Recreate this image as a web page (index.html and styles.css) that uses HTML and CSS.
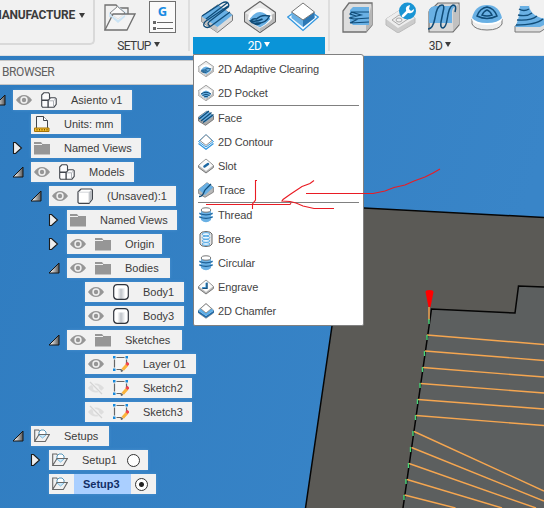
FILE: index.html
```html
<!DOCTYPE html>
<html lang="en">
<head>
<meta charset="utf-8">
<title>Manufacture</title>
<link rel="stylesheet" href="styles.css">
</head>
<body>
<svg class="defs" width="0" height="0">
  <defs>
    <linearGradient id="arrowFill" x1="0" y1="0" x2="1" y2="0"><stop offset=".2" stop-color="#eee"/><stop offset="1" stop-color="#555"/></linearGradient>
    <linearGradient id="cyl" x1="0" y1="0" x2="1" y2="0"><stop offset="0" stop-color="#fff"/><stop offset=".25" stop-color="#fff"/><stop offset=".5" stop-color="#c0c4ca"/><stop offset=".8" stop-color="#fff"/></linearGradient>
    <linearGradient id="sky" x1="0" y1="0" x2="1" y2=".3"><stop offset="0" stop-color="#2f7cc0"/><stop offset="1" stop-color="#3985c8"/></linearGradient>
  </defs>
  <symbol id="open" viewBox="0 0 12 12"><path d="M11 1v10H1z" fill="url(#arrowFill)" stroke="#161616"/></symbol>
  <symbol id="closed" viewBox="0 0 12 12"><path d="M1.500.500h2L9.500 6l-6 5.500h-2z" fill="#eee" stroke="#1c1c1c" stroke-width="1.100"/></symbol>
  <symbol id="eye" viewBox="0 0 16 16"><path d="M0 8Q3.500 3 8 3t8 5q-3.500 5-8 5T0 8z" fill="#969696"/><circle cx="8" cy="8" r="3.700" fill="#f1f1f1"/><circle cx="8" cy="8" r="2.200" fill="#969696"/></symbol>
  <symbol id="hidden" viewBox="0 0 16 16"><path d="M0 8Q3.500 3.500 8 3.500T16 8q-3.500 4.500-8 4.500T0 8z" fill="#dedede"/><circle cx="8" cy="8" r="2.800" fill="#f1f1f1"/><path d="M2 1.500l13 13" stroke="#f1f1f1" stroke-width="3"/><path d="M2 2l12 12" stroke="#d4d4d4" stroke-width="1.200"/></symbol>
  <symbol id="folder" viewBox="0 0 16 16"><path d="M0 2h7l1.500 2H16v10.500H0z" fill="#969696"/><path d="M0 4.500h8" stroke="#f1f1f1"/></symbol>
  <symbol id="part" viewBox="0 0 16 16"><g fill="#fbfbfc" stroke="#41454c" stroke-width="1.100" stroke-linejoin="round"><path d="M.700 3L3 .700h4.500L8.500 2v6H.700z"/><path d="M.700 8.500h6.500v6.800H1.500L.700 14z"/><path d="M7.200 8.500l2.200-2.700h4.500l1.300 1v5.500l-2.400 3H7.200z"/></g><path d="M7.800 8.800h4.700l2.200-2M12.500 9v6" fill="none" stroke="#aeb2b8"/></symbol>
  <symbol id="cube" viewBox="0 0 16 16"><path d="M1 4l3-3h10.300l1.200 1v9l-3.500 4.300H2L1 14.300z" fill="#fff" stroke="#41454c" stroke-width="1.200"/><path d="M12 4l3-2.500V11l-3 3.500z" fill="#b9bcc1"/><path d="M1.500 4.200H12v10.500" fill="none" stroke="#d3d5d9"/></symbol>
  <symbol id="units" viewBox="0 0 16 16"><path d="M2.500 13V.500h7l4 4V13z" fill="#f5f6f8" stroke="#41454c"/><path d="M9.500.500v4h4" fill="#fff" stroke="#41454c"/><path d="M.500 12h14.500v3.500H.500z" fill="#f3bd2c" stroke="#a57408"/><path d="M3 13v1.500M5.500 13v1.500M8 13v1.500M10.500 13v1.500M13 13v1.500" stroke="#7b5200"/></symbol>
  <symbol id="body" viewBox="0 0 16 16"><path d="M.700 3.500Q1.500.700 4 .700h8q2.500 0 3.300 2.800v9q-.8 2.800-3.300 2.800H4Q1.500 15.300.700 12.500z" fill="url(#cyl)" stroke="#30343c" stroke-width="1.200"/><path d="M2 2.500Q8 .500 14 2.500 13 4.500 8 4.500T2 2.500z" fill="#fff"/></symbol>
  <symbol id="sketch" viewBox="0 0 16 16"><path d="M1.500 1.500h12v12h-12z" fill="#f6f6f6"/><path d="M3.500 1.500h8M3.500 13.500h5M1.500 3.500v8M13.500 3.500v4" stroke="#666" stroke-width="1.200"/><path d="M0 0h2.500v2.500H0zM12.500 0H15v2.500h-2.500zM0 12.500h2.500V15H0z" fill="#1689dc"/><path d="M9.700 13.700l4.500-5" stroke="#fbb43c" stroke-width="3.200"/><path d="M13.500 9l2-2.300" stroke="#f04450" stroke-width="3.200"/><path d="M8 15.500l1.500-1.500" stroke="#666" stroke-width="2"/></symbol>
  <symbol id="setup" viewBox="0 0 16 16"><path d="M.700 13.500V2h4l1 1.500M.700 13.500L5 6.500h10.300l-4 7z" fill="none" stroke="#686868" stroke-width="1.100"/><path d="M5 7l3.500 3L12 7" fill="#cce8f8" stroke="#78b9df"/><path d="M5 6.500V4l2-2h3l2 2v2.500" fill="#fff" stroke="#5596ba"/><path d="M4.500 6.500h10.800" stroke="#686868"/></symbol>

  <symbol id="face" viewBox="0 0 32 32"><path d="M.500 15.500L16.500 4l15 10v5.500L16.500 31.500.500 20.500z" fill="#dcdcdc" stroke="#777"/><path d="M.500 15.500v5l16 11V26z" fill="#c3c3c3"/><path d="M.500 15.500L16.500 4l15 10L16.500 26z" fill="#69b0e4"/><path d="M1 15L21 2q4-2 6 0 2 3-1 5L9 20q-4 3 0 5M5 18L26 2M3 25q3 3 7 0L29 11M3 25q-1-3 2-5L27 5" fill="none" stroke="#104c78" stroke-width="1.300"/></symbol>
  <symbol id="block" viewBox="0 0 32 32"><path d="M.500 11.500L16 .500l15.500 11v9L16 31.500.500 20.500z" fill="#ececec" stroke="#666" stroke-width="1.200"/><path d="M16 20v11L1 20v-8z" fill="#d0d0d0"/><path d="M31 12v8L16 31V20z" fill="#b9b9b9"/><path d="M4 18q0-10 12-11 12 1 12 11-5 6-12 9-7-3-12-9z" fill="#fff"/><path d="M5.500 18q10.500-14 21 0-4 5-10.500 8.500Q9 23 5.500 18z" fill="#69b0e4"/></symbol>
  <symbol id="adaptive" viewBox="0 0 32 32"><use href="#block"/><path d="M6.500 20q3-3 6-2 5-5 13-3-4 8-13 7-4 1-6-2q7 1 12-2M9 22q4 3 8 0" fill="none" stroke="#104c78" stroke-width="1.500"/></symbol>
  <symbol id="pocket" viewBox="0 0 32 32"><use href="#block"/><path d="M6 18q10-7 20 0M9 21q7-5 14 0M12 24q4-3 8 0" fill="none" stroke="#104c78" stroke-width="2"/></symbol>
  <symbol id="contour" viewBox="0 0 32 32"><path d="M.700 16L16 5l15.300 11L16 29.500z" fill="#f4faff" stroke="#3196df" stroke-width="1.300"/><path d="M4.500 11v6L16 26l11.500-9v-6z" fill="#69b0e4"/><path d="M16 19v7l11.500-9v-6z" fill="#2c78b5"/><path d="M4.500 11L16 2l11.500 9L16 19z" fill="#fff" stroke="#777"/></symbol>
  <symbol id="contourSmall" viewBox="0 0 16 16"><path d="M.500 9.500L8 15.300l7.500-5.800" fill="none" stroke="#3196df" stroke-width="1.200"/><path d="M.500 7.500L8 .700l7.500 6.800L8 13z" fill="#e8f5ff" stroke="#3196df"/><path d="M2 6.500L8 .700l6 5.800-6 4.800z" fill="#fff" stroke="#777" stroke-width=".8"/></symbol>
  <symbol id="faceSmall" viewBox="0 0 16 16"><path d="M.500 7L9 1l6.500 5v3.500L7.500 15.300.500 11z" fill="#a9a9a9" stroke="#666" stroke-width=".8"/><path d="M.500 7.500L9 1l6.500 5-8 6z" fill="#69b0e4"/><path d="M1 9L11 1M3 11L13.500 2.500M5 12.500L15.500 4.500" stroke="#104c78" stroke-width="1.300"/></symbol>
  <symbol id="slot" viewBox="0 0 16 16"><path d="M.600 7.500L8 1l7.400 6.500v2L8 15 .600 9.500z" fill="#bbb" stroke="#777"/><path d="M1 7.500L8 1.300l7 6.200L8 13z" fill="#fafafa"/><path d="M6.500 8.500l3.500-2.500" stroke="#1c67a2" stroke-width="2.500" stroke-linecap="round"/></symbol>
  <symbol id="trace" viewBox="0 0 16 16"><path d="M.600 7.500L9 .700l6.400 4.500v5L7 15.300.600 11.500z" fill="#b8b8b8" stroke="#777" stroke-width=".8"/><path d="M.600 7.500L9 .700l6.400 4.500L7 13z" fill="#69b0e4"/><path d="M1 14.500c6 0 3-5 8-8.500l4-4" fill="none" stroke="#104c78" stroke-width="1.300"/></symbol>
  <symbol id="thread" viewBox="0 0 16 16"><path d="M3 3v10q5 4.500 10 0V3z" fill="#69b0e4"/><ellipse cx="8" cy="3" rx="4.700" ry="2.200" fill="#fff" stroke="#777"/><path d="M1 5.500q7 2 14 0 0 2-2 2.500-5 1.500-10 0-2-.5-2-2.500zM1 9q7 2 14 0 0 2-2 2.500-5 1.500-10 0-2-.5-2-2.500z" fill="#69b0e4"/><path d="M1.500 6.500q6.500 2.800 13 0M1.500 10q6.500 2.800 13 0" fill="none" stroke="#1c5f94" stroke-width="1.300"/></symbol>
  <symbol id="bore" viewBox="0 0 16 16"><path d="M2 3q1-2.500 6-2.500T14 3v10q-1 2.500-6 2.500T2 13z" fill="#e6e6e6" stroke="#666"/><g fill="#eaf6ff" stroke="#57aae5"><ellipse cx="8" cy="3.200" rx="3.800" ry="1.600"/><ellipse cx="8" cy="6.700" rx="3.800" ry="1.500"/><ellipse cx="8" cy="9.900" rx="3.800" ry="1.500"/><ellipse cx="8" cy="13" rx="3.800" ry="1.400"/></g></symbol>
  <symbol id="engrave" viewBox="0 0 16 16"><path d="M.600 7.500L8 1l7.400 6.500v2L8 15 .600 9.500z" fill="#bbb" stroke="#777"/><path d="M1 7.500L8 1.300l7 6.200L8 13z" fill="#fafafa"/><path d="M7.500 4l2-1v7h-5l-.5-2h3.500z" fill="#3d92d0"/><path d="M9 4v5.500H4.500" fill="none" stroke="#174e78" stroke-width="1.200"/></symbol>
  <symbol id="chamfer" viewBox="0 0 16 16"><path d="M.500 7L8 .700 15.500 7v3L8 15.300.500 10z" fill="#ddd" stroke="#888" stroke-width=".8"/><path d="M0 7.500L8 13l8-5.500v2L8 15 0 9.500z" fill="#1e69a8"/><path d="M.500 7.500l2-2L8 10l5.500-4.500 2 2L8 13z" fill="#5caee9"/><path d="M2.500 5.500L8 .700l5.500 4.800L8 10z" fill="#fff" stroke="#777" stroke-width=".8"/></symbol>
</svg>

<svg class="viewport" viewBox="0 0 544 508">
  <rect width="544" height="508" fill="url(#sky)"/>
  <path d="M350 207.300L544 217.500V508H305.500z" fill="#5b5a56"/>
  <path d="M431 309L515 313 518.500 286.500 544 287V508H403z" fill="#5c5f5f"/>
  <path d="M305.500 508L332 326 350 207.300 544 217.500" fill="none" stroke="#050505" stroke-width="1.500"/>
  <path d="M403 508L431.500 309 515 313 518.500 286 544 287" fill="none" stroke="#050505" stroke-width="1.500"/>
  <g fill="none" stroke="#f5a650" stroke-width="1.400">
    <path d="M429 307v13M427 335l117 9.500M425 351l119 9.500M423 367.500l121 9.500M420.500 383.500l123.500 9.500M418 399.500l126 9.500M416 415.500l128 10M414 431.500l130 59.500M411.500 447.500L544 501M409 463.500l127 44.500M407 479.500l95 28.500M404.500 495l51 13"/>
  </g>
  <path d="M429 319v5M427 335v5M424.500 351v5M422.500 367v5M420 383v5M417.500 399v5M415.500 415v5M413 431v5M410.500 447v5M408.500 463v5M406 479v5M404 495v5" stroke="#47d779" stroke-width="1.400"/>
  <path d="M425.500 292q0-2 4-2t4 2l-3 15h-2z" fill="#f00"/>
</svg>

<header class="toolbar">
  <div class="workspace"><span>MANUFACTURE</span><i class="caret"></i></div>
  <section class="group setup-group">
    <div class="icons">
      <svg class="folder-big" viewBox="0 0 32 28"><path d="M1 27V2h11l3 3h9v6" fill="none" stroke="#707070" stroke-width="1.300"/><path d="M5 10l9-7 9 7v4H5z" fill="#cfe5f5"/><path d="M6 10l7.500-6.500L21 10l-7 6z" fill="#fafafa" stroke="#888"/><path d="M1 27L9 11h22l-8 16z" fill="#f3f3f3" fill-opacity=".85" stroke="#707070" stroke-width="1.300"/><path d="M7 14l7 6 7-6v-2l-7 5-7-5z" fill="#cbe4f5"/></svg>
      <div class="gcode"><b>G</b><i></i><i></i></div>
    </div>
    <div class="label"><span>SETUP</span><i class="caret"></i></div>
  </section>
  <section class="group two-group">
    <div class="icons"><svg><use href="#face"/></svg><svg><use href="#adaptive"/></svg><svg><use href="#contour"/></svg></div>
    <div class="label active"><span>2D</span><i class="caret"></i></div>
  </section>
  <section class="group three-group">
    <div class="icons">
      <svg viewBox="0 0 32 32"><path d="M1 31V10L7 2h23v22l-6 7z" fill="#ddd" stroke="#707070" stroke-width="1.300"/><path d="M30 2v22l-6 7v-6z" fill="#b7b7b7"/><path d="M11 6h16v18H11l-3-3V9z" fill="#69b0e4"/><path d="M27 11H9l10 3-12 3 5 1 15-1M8 22l8-4M8 22l19-1M10 11l-2 2 6 2" fill="none" stroke="#104c78" stroke-width="1.200"/></svg>
      <svg viewBox="0 0 32 32"><path d="M1 18L15 9l15 8v5L13 32 1 24z" fill="#ccc" stroke="#bbb"/><path d="M1 18l14-9 15 8-17 10z" fill="#eee"/><path d="M7 19l7-5 9 4-9 6z" fill="none" stroke="#aaa"/><ellipse cx="14" cy="19" rx="3" ry="2" fill="none" stroke="#aaa"/><circle cx="22.500" cy="10" r="8.500" fill="#1995d4"/><path d="M18 15l5-5" stroke="#fff" stroke-width="2.600" stroke-linecap="round"/><path d="M25 4q-5 1-4 5 1 4 5 3 3-1 3-4l-3 2-2-2z" fill="#fff"/></svg>
      <svg viewBox="0 0 32 32"><path d="M1 30V11q1-4 5-5l4-4h21v22l-6 7H1z" fill="#d8d8d8" stroke="#707070" stroke-width="1.200"/><path d="M1 22V9q2-4 7-4h20q-4 2-4 6v11z" fill="#69b0e4"/><path d="M31 3v20l-6 7V12q0-5 6-9z" fill="#c1c1c1"/><path d="M0 28q5 0 7-11Q9 4 14 4q3 0 1 7l-2 10q-1 6 2 6 3-1 4-8 2-14 6-15 4 0 2 7" fill="none" stroke="#104c78" stroke-width="1.500"/></svg>
      <svg viewBox="0 0 32 32"><path d="M1 18v5q3 6 15 6t15-6v-5" fill="#eee" stroke="#777"/><ellipse cx="16" cy="18" rx="15" ry="6" fill="#fff"/><path d="M1 17Q4 4 16 4t15 13q-4 5-15 5T1 17z" fill="#69b0e4"/><path d="M6 15q3-8 10-9 7 1 10 9-10 5-20 0zm5-1q2-4 5-5 3 1 5 5-5 2-10 0z" fill="none" stroke="#104c78" stroke-width="1.500"/></svg>
      <svg viewBox="0 0 32 32"><path d="M1 25l7-4h24v6l-6 4H1z" fill="#ddd" stroke="#777"/><path d="M6 3h9q0 12 17 15v5l-6 3H1q5-9 5-23z" fill="#69b0e4"/><path d="M6 3l3-2h6v4H6z" fill="#eee"/><path d="M5 8q5 3 10 0M4 14q9 2 14-2M3 19q14 1 20-4M2 24q20 0 27-6" fill="none" stroke="#104c78" stroke-width="1.400"/></svg>
    </div>
    <div class="label"><span>3D</span><i class="caret"></i></div>
  </section>
</header>

<div class="browser-title">BROWSER</div>
<main class="tree">
  <div class="row l0"><svg class="toggle"><use href="#open"/></svg><div class="node w119"><svg><use href="#eye"/></svg><svg><use href="#part"/></svg><span>Asiento v1</span></div></div>
  <div class="row l1"><div class="node w90"><svg><use href="#units"/></svg><span>Units: mm</span></div></div>
  <div class="row l1"><svg class="toggle"><use href="#closed"/></svg><div class="node w110"><svg><use href="#folder"/></svg><span>Named Views</span></div></div>
  <div class="row l1"><svg class="toggle"><use href="#open"/></svg><div class="node w103"><svg><use href="#eye"/></svg><svg><use href="#part"/></svg><span>Models</span></div></div>
  <div class="row l2"><svg class="toggle"><use href="#open"/></svg><div class="node w127"><svg><use href="#eye"/></svg><svg><use href="#cube"/></svg><span>(Unsaved):1</span></div></div>
  <div class="row l3"><svg class="toggle"><use href="#closed"/></svg><div class="node w110"><svg><use href="#folder"/></svg><span>Named Views</span></div></div>
  <div class="row l3"><svg class="toggle"><use href="#closed"/></svg><div class="node w95"><svg><use href="#eye"/></svg><svg><use href="#folder"/></svg><span>Origin</span></div></div>
  <div class="row l3"><svg class="toggle"><use href="#open"/></svg><div class="node w103"><svg><use href="#eye"/></svg><svg><use href="#folder"/></svg><span>Bodies</span></div></div>
  <div class="row l4"><div class="node w99"><svg><use href="#eye"/></svg><svg><use href="#body"/></svg><span>Body1</span></div></div>
  <div class="row l4"><div class="node w99"><svg><use href="#eye"/></svg><svg><use href="#body"/></svg><span>Body3</span></div></div>
  <div class="row l3"><svg class="toggle"><use href="#open"/></svg><div class="node w115"><svg><use href="#eye"/></svg><svg><use href="#folder"/></svg><span>Sketches</span></div></div>
  <div class="row l4"><div class="node w111"><svg><use href="#eye"/></svg><svg><use href="#sketch"/></svg><span>Layer 01</span></div></div>
  <div class="row l4"><div class="node w107"><svg><use href="#hidden"/></svg><svg><use href="#sketch"/></svg><span>Sketch2</span></div></div>
  <div class="row l4"><div class="node w107"><svg><use href="#hidden"/></svg><svg><use href="#sketch"/></svg><span>Sketch3</span></div></div>
  <div class="row l1"><svg class="toggle"><use href="#open"/></svg><div class="node w78"><svg><use href="#setup"/></svg><span>Setups</span></div></div>
  <div class="row l2"><svg class="toggle"><use href="#closed"/></svg><div class="node w99"><svg><use href="#setup"/></svg><span>Setup1</span><i class="radio"></i></div></div>
  <div class="row l2"><div class="node w107"><svg><use href="#setup"/></svg><span class="selected">Setup3</span><i class="radio on"></i></div></div>
</main>

<nav class="menu">
  <div class="item"><svg><use href="#adaptive"/></svg>2D Adaptive Clearing</div>
  <div class="item"><svg><use href="#pocket"/></svg>2D Pocket</div>
  <hr>
  <div class="item"><svg><use href="#faceSmall"/></svg>Face</div>
  <div class="item"><svg><use href="#contourSmall"/></svg>2D Contour</div>
  <div class="item"><svg><use href="#slot"/></svg>Slot</div>
  <div class="item"><svg><use href="#trace"/></svg>Trace</div>
  <hr>
  <div class="item"><svg><use href="#thread"/></svg>Thread</div>
  <div class="item"><svg><use href="#bore"/></svg>Bore</div>
  <div class="item"><svg><use href="#thread"/></svg>Circular</div>
  <div class="item"><svg><use href="#engrave"/></svg>Engrave</div>
  <div class="item"><svg><use href="#chamfer"/></svg>2D Chamfer</div>
</nav>

<svg class="markup" viewBox="0 0 544 508"><path d="M257 180.500h-1.500V200l-3 4v5M206 204.500h84l1-1.500M314 180.500l-4 3-8 3-6 4-6 4-7 5-1 1.500 8 .500 6 1.500 7 3 11 2.500h20M306 193.500h67l12-2.500 9-3.500 11-2.500 9-4 11-4 8-4 7-4"/></svg>
</body>
</html>
```
FILE: styles.css
```css
* { box-sizing: border-box; }
body { margin: 0; width: 544px; height: 508px; overflow: hidden; position: relative; font: 11px "Liberation Sans", Arial, sans-serif; color: #3c3c3c; background: #347fc3; }
svg { display: block; flex: none; }
.defs { position: absolute; }
.viewport, .markup { position: absolute; left: 0; top: 0; width: 544px; height: 508px; }
.markup { pointer-events: none; }
.markup path { fill: none; stroke: #e91c24; stroke-width: 1.1; }

.toolbar { position: relative; display: flex; height: 56px; background: #f1f1f1; border-bottom: 1px solid #dcdfe2; }
.workspace { width: 95px; height: 45px; border: solid #d9d9d9; border-width: 0 2px 2px 0; border-radius: 0 0 5px 0; display: flex; align-items: center; justify-content: flex-end; padding: 0 8px 13px 0; font: bold 12px Roboto, sans-serif; white-space: nowrap; gap: 4px; letter-spacing: -.2px; }
.caret { display: block; flex: none; border: 3.5px solid transparent; border-top: 5px solid currentColor; border-bottom: 0; }
.group { height: 55px; display: flex; flex-direction: column; background: linear-gradient(#dedede, #dedede) right top / 2px 51px no-repeat; }
.icons { height: 37px; flex: none; display: flex; padding-top: 1px; }
.icons > svg { width: 32px; height: 32px; }
.label { height: 17px; display: flex; align-items: center; justify-content: center; gap: 3px; font: 12px Roboto, sans-serif; letter-spacing: -.6px; }
.label .caret { margin-bottom: 3px; }
.setup-group { width: 95px; }
.setup-group .icons { gap: 13px; padding-left: 9px; }
.setup-group .label { padding-right: 8px; }
.icons > .folder-big { height: 28px; margin-top: 2px; }
.gcode { width: 27px; height: 32px; border: 1px solid #707070; background: #fafafa; display: flex; flex-direction: column; gap: 3px; }
.gcode b { height: 16px; padding-top: 1px; text-align: center; font: bold 13px/16px "Open Sans", sans-serif; color: #188be3; }
.gcode i { height: 3px; margin: 0 2px 0 3px; background: linear-gradient(#666, #666) 0 0 / 3px 3px no-repeat, linear-gradient(#666, #666) 4px 1px / 16px 1px no-repeat; }
.two-group { width: 140px; }
.two-group .icons { gap: 11px; padding-left: 11px; }
.active { margin: 0 5px 0 3px; background: #0a94d8; color: #fff; }
.three-group { width: 214px; background: none; }
.three-group .icons { gap: 11px; padding-left: 12px; }
.three-group .label { padding-left: 6px; }

.browser-title { position: relative; margin-top: 4px; height: 25px; padding: 0 2px; border: solid #c6c6c6; border-width: 1px 0; width: 194px; background: #f1f1f1; font: 12px/23px Roboto, sans-serif; letter-spacing: -.4px; color: #606060; }
.tree { position: relative; padding-top: 5px; display: flex; flex-direction: column; gap: 4px; }
.row { height: 20px; display: flex; align-items: center; justify-content: flex-start; }
.row .toggle { width: 12px; height: 12px; margin: 0 7px 0 -19px; }
.l0 { padding-left: 13px; } .l1 { padding-left: 31px; } .l2 { padding-left: 49px; } .l3 { padding-left: 67px; } .l4 { padding-left: 85px; }
.node { height: 20px; display: flex; align-items: center; gap: 9px; padding-left: 3px; background: #f1f1f1; white-space: nowrap; box-shadow: 0 0 3px #4b92cf; }
.node svg { width: 16px; height: 16px; }
.node span { margin-left: 5px; }
.w78 { width: 78px; } .w90 { width: 90px; } .w95 { width: 95px; } .w99 { width: 99px; } .w103 { width: 103px; } .w107 { width: 107px; } .w110 { width: 110px; } .w111 { width: 111px; } .w115 { width: 115px; } .w119 { width: 119px; } .w127 { width: 127px; }
.radio { flex: none; width: 13px; height: 13px; border: 1px solid #333; border-radius: 50%; margin-left: auto; margin-right: 8px; background: #fff; }
.radio.on { margin-left: -5px; background: radial-gradient(circle, #222 0 2px, #fff 3px); }
.node .selected { flex: none; align-self: stretch; width: 57px; margin-left: -3px; padding-left: 9px; line-height: 20px; font-weight: bold; color: #122e66; background: #aacfff; }

.menu { position: absolute; left: 193px; top: 54px; width: 171px; height: 272px; padding: 2px 4px; background: #fff; border: 1px solid #808080; border-radius: 0 3px 2px 2px; color: #444; letter-spacing: -.12px; }
.item { height: 24px; display: flex; align-items: center; gap: 4px; white-space: nowrap; }
.item svg { width: 16px; height: 16px; }
.menu hr { height: 1px; margin: 0; border: 0; background: #808080; }
```
